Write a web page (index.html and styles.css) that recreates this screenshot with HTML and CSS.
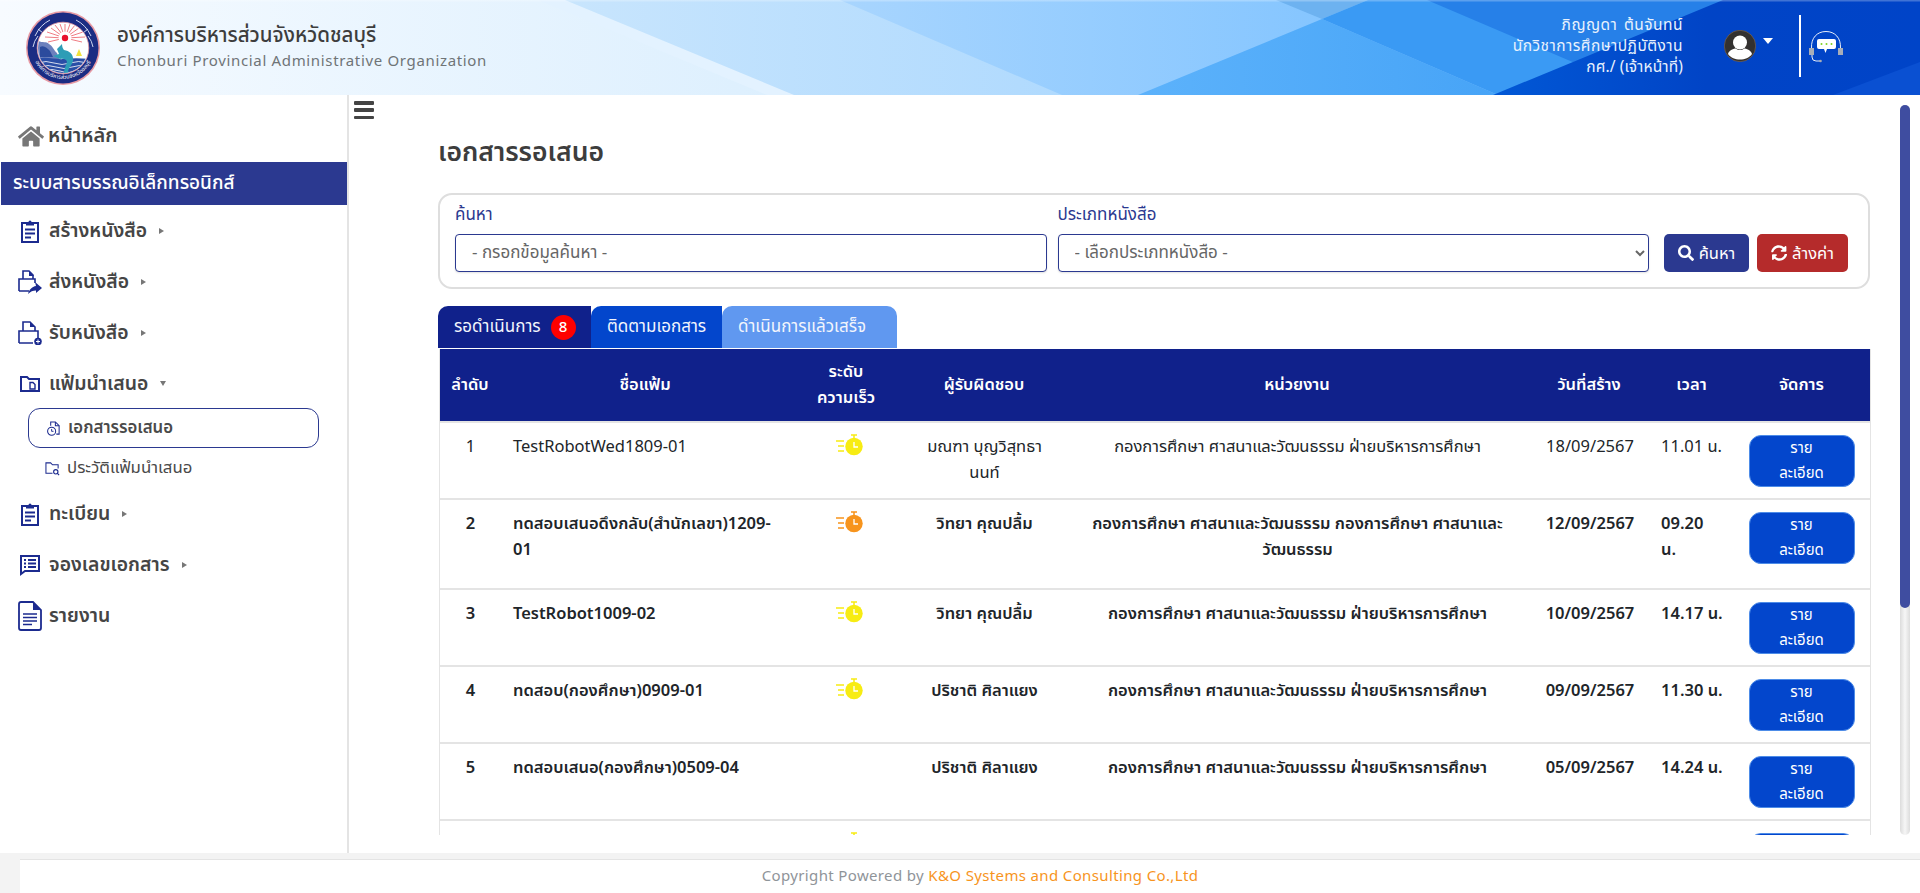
FILE: index.html
```html
<!DOCTYPE html>
<html lang="th">
<head>
<meta charset="utf-8">
<title>เอกสารรอเสนอ</title>
<link rel="stylesheet" href="styles.css">
</head>
<body>
<header class="topbar">
  <svg class="topbar-art" viewBox="0 0 1920 95" preserveAspectRatio="none" aria-hidden="true">
    <defs>
      <linearGradient id="g0" gradientUnits="userSpaceOnUse" x1="0" x2="800" y1="0" y2="0">
        <stop offset="0" stop-color="#f7fbff"/><stop offset="1" stop-color="#dceffe"/>
      </linearGradient>
      <linearGradient id="g2" gradientUnits="userSpaceOnUse" x1="565" x2="1062" y1="0" y2="0">
        <stop offset="0" stop-color="#c8e5fd"/><stop offset="1" stop-color="#b0dafe"/>
      </linearGradient>
      <linearGradient id="g3" gradientUnits="userSpaceOnUse" x1="840" x2="1368" y1="0" y2="0">
        <stop offset="0" stop-color="#a8d5fe"/><stop offset="1" stop-color="#82c4ff"/>
      </linearGradient>
      <linearGradient id="g4" gradientUnits="userSpaceOnUse" x1="1138" x2="1498" y1="0" y2="0">
        <stop offset="0" stop-color="#5cb2fb"/><stop offset="1" stop-color="#47a4f7"/>
      </linearGradient>
      <linearGradient id="g7" gradientUnits="userSpaceOnUse" x1="1493" x2="1920" y1="0" y2="0">
        <stop offset="0" stop-color="#0158d6"/><stop offset="0.5" stop-color="#0144c6"/><stop offset="1" stop-color="#0044c8"/>
      </linearGradient>
    </defs>
    <rect width="1920" height="95" fill="url(#g0)"/>
    <polygon points="538,0 1920,0 1920,95 767,95" fill="#e3f2ff"/>
    <polygon points="565,0 1920,0 1920,95 794,95" fill="url(#g2)"/>
    <polygon points="840,0 1920,0 1920,95 1062,95" fill="url(#g3)"/>
    <polygon points="1276,0 1368,0 1322,19" fill="#6db2f0"/>
    <polygon points="1138,95 1322,19 1498,95" fill="url(#g4)"/>
    <polygon points="1322,19 1368,0 1920,0 1920,95 1498,95" fill="#3a9af4"/>
    <polygon points="1427,0 1920,0 1920,95 1650,95" fill="#2680e8"/>
    <polygon points="1723,0 1920,0 1920,95 1493,95" fill="url(#g7)"/>
    <polygon points="1833,95 1920,62 1920,95" fill="#0a50d2"/>
    <rect width="1920" height="1.500" fill="#fff" opacity="0.25"/>
  </svg>
  <div class="brand">
    <svg class="logo" viewBox="0 0 74 74" aria-hidden="true">
      <defs>
        <path id="ring-path" d="M6 37A31 31 0 0 0 68 37"/>
        <clipPath id="inner-clip"><circle cx="37" cy="37" r="25"/></clipPath>
      </defs>
      <circle cx="37" cy="37" r="37" fill="#e79aa4"/>
      <circle cx="37" cy="37" r="35.500" fill="#1b2c83"/>
      <path d="M9 25Q14 14 24 9M65 25Q60 14 50 9M7 36Q8 30 12 25M67 36Q66 30 62 25" fill="none" stroke="#cfd6f0" stroke-width="1"/>
      <path d="M12 18L17 22L14 27M62 18L57 22L60 27" fill="none" stroke="#cfd6f0" stroke-width="1"/>
      <text class="logo-ring"><textPath href="#ring-path" startOffset="50%" text-anchor="middle">องค์การบริหารส่วนจังหวัดชลบุรี</textPath></text>
      <circle cx="37" cy="37" r="25.800" fill="#fff" stroke="#e79aa4" stroke-width="0.800"/>
      <g clip-path="url(#inner-clip)">
        <g stroke="#e8434e" stroke-width="0.700">
          <path d="M39 27L39 13M39 27L34 13M39 27L44 13M39 27L29 14M39 27L49 14M39 27L25 17M39 27L53 17M39 27L21 21M39 27L57 21M39 27L19 26M39 27L59 26M39 27L22 31M39 27L56 31"/>
        </g>
        <circle cx="39" cy="27" r="6.500" fill="#fff"/>
        <circle cx="39" cy="27" r="3.200" fill="#e8112d"/>
        <path d="M12 30C17 32 20 30 23 33C27 35 28 40 31 42L34 50H12Z" fill="#6c80bd"/>
        <path d="M14 36C18 34 21 37 24 40L27 46H14Z" fill="#2c4b9d"/>
        <path d="M10 48C20 45 30 49 38 48C46 47 54 47 64 48V66H10Z" fill="#2a4ea6"/>
        <path d="M12 52Q20 49 28 52T44 52T62 52M14 56Q22 53 30 56T46 56T60 56M18 60Q26 57 34 60T56 60" fill="none" stroke="#fff" stroke-width="0.800"/>
        <path d="M53 38L56 45H50Z" fill="#f2e23a"/>
        <path d="M36 33C36 36 37 38 38 39C44 40 48 44 47 50C46 54 43 56 42 60L44 65L38 62C38 58 40 54 41 51C41 49 38 47 34 48L27 45L33 43L31 38Z" fill="#2d9db6"/>
      </g>
    </svg>
    <div class="brand-text">
      <div class="brand-th">องค์การบริหารส่วนจังหวัดชลบุรี</div>
      <div class="brand-en">Chonburi Provincial Administrative Organization</div>
    </div>
  </div>
  <div class="user-area">
    <div class="user-lines">
      <div class="user-name">ภิญญดา ต้นจันทน์</div>
      <div class="user-job">นักวิชาการศึกษาปฏิบัติงาน</div>
      <div>กศ./ (เจ้าหน้าที่)</div>
    </div>
    <svg class="avatar" viewBox="0 0 32 32" aria-hidden="true">
      <circle cx="16" cy="16" r="15.700" fill="#333130" stroke="#8a6a4a" stroke-width="0.600"/>
      <circle cx="16" cy="12.500" r="7" fill="#fff"/>
      <path d="M4 24C5 20 10 18.500 12 18.500C14 20.500 18 20.500 20 18.500C22 18.500 27 20 28 24C25 28 21 29.500 16 29.500C11 29.500 7 28 4 24Z" fill="#fff"/>
    </svg>
    <span class="caret"></span>
    <span class="divider"></span>
    <svg class="support" viewBox="0 0 34 32" aria-hidden="true">
      <path d="M2.500 17C2 7 8 0.500 17 0.500C26 0.500 32 7 31.500 17" fill="none" stroke="#fff" stroke-width="0.900"/>
      <path d="M3 24V26Q3 30 7 30H11" fill="none" stroke="#fff" stroke-width="0.900"/>
      <circle cx="11.500" cy="30" r="1.300" fill="#a7adb8"/>
      <rect x="0" y="17" width="5" height="7" fill="#a7adb8"/>
      <rect x="29" y="17" width="5" height="7" fill="#a7adb8"/>
      <path d="M10 8H25Q27 8 27 10V16Q27 18 25 18H18L16.500 22L15 18H10Q8 18 8 16V10Q8 8 10 8Z" fill="#fff"/>
      <circle cx="12.500" cy="13" r="1" fill="#7ed321"/>
      <circle cx="17.500" cy="13" r="1" fill="#7ed321"/>
      <circle cx="22.500" cy="13" r="1" fill="#7ed321"/>
    </svg>
  </div>
</header>

<div class="shell">
  <aside class="sidebar">
    <a class="nav-home">
      <svg class="icon-home" viewBox="0 0 576 512" aria-hidden="true"><path fill="#777" d="M280 148L96 300v164a16 16 0 0 0 16 16l112-.3a16 16 0 0 0 16-16V368a16 16 0 0 1 16-16h64a16 16 0 0 1 16 16v95.600a16 16 0 0 0 16 16l112 .4a16 16 0 0 0 16-16V300L296 148a12 12 0 0 0-16 0zM571 251l-83-69V44a12 12 0 0 0-12-12h-56a12 12 0 0 0-12 12v72l-90-74a48 48 0 0 0-61 0L5 251a12 12 0 0 0-2 17l26 31a12 12 0 0 0 17 2L280 108a12 12 0 0 1 16 0l235 193a12 12 0 0 0 17-2l25-31a12 12 0 0 0-2-17z"/></svg>
      หน้าหลัก
    </a>
    <div class="nav-section">ระบบสารบรรณอิเล็กทรอนิกส์</div>
    <a class="nav-item">
      <svg class="nav-icon" viewBox="0 0 24 24" aria-hidden="true"><use href="#ic-clip"/></svg>
      สร้างหนังสือ <span class="tri-right"></span>
    </a>
    <a class="nav-item">
      <svg class="nav-icon" viewBox="0 0 24 24" aria-hidden="true"><path d="M1 21V9H5V1H11L15 5V9H17V13M1 21H11M5 9H15" fill="none" stroke="#1c2b8f" stroke-width="1.600"/><path d="M11 1V6H16Z" fill="#1c2b8f"/><path d="M17 12L24 18L18 23V20.500C15 20.500 12.500 21.500 10 24C11 20 14 16.500 18 16Z" fill="#1c2b8f"/></svg>
      ส่งหนังสือ <span class="tri-right"></span>
    </a>
    <a class="nav-item">
      <svg class="nav-icon" viewBox="0 0 24 24" aria-hidden="true"><path d="M1 22V10H5V1H12L17 6V10H20V17M5 10H17M1 22H15" fill="none" stroke="#1c2b8f" stroke-width="1.600"/><path d="M12 1V6H17Z" fill="#1c2b8f"/><circle cx="20" cy="20.500" r="3.800" fill="#1c2b8f"/><path d="M20 18.500V22.500M18 20.500H22" stroke="#fff" stroke-width="1"/></svg>
      รับหนังสือ <span class="tri-right"></span>
    </a>
    <a class="nav-item">
      <svg class="nav-icon" viewBox="0 0 24 24" aria-hidden="true"><path d="M3 19V5H9L11 7H21V19Z" fill="none" stroke="#1c2b8f" stroke-width="2"/><path d="M12 10.500H15L17 12.500V17H12Z" fill="none" stroke="#1c2b8f" stroke-width="1.400"/></svg>
      แฟ้มนำเสนอ <span class="tri-down"></span>
    </a>
    <a class="sub-item sub-active">
      <svg class="sub-icon" viewBox="0 0 16 16" aria-hidden="true"><path d="M5 5V1H10L14 5V14H11" fill="none" stroke="#1c2b8f" stroke-width="1.100"/><path d="M10 1V5H14" fill="none" stroke="#1c2b8f" stroke-width="1.100"/><circle cx="6" cy="11" r="4.300" fill="#fff" stroke="#1c2b8f" stroke-width="1.100"/><path d="M6 8.500V11H8" fill="none" stroke="#1c2b8f" stroke-width="1"/></svg>
      เอกสารรอเสนอ
    </a>
    <a class="sub-item">
      <svg class="sub-icon" viewBox="0 0 16 16" aria-hidden="true"><path d="M8 13H1V2H6L8 4H14V8" fill="none" stroke="#1c2b8f" stroke-width="1.100"/><circle cx="11.500" cy="11.500" r="2.300" fill="none" stroke="#1c2b8f" stroke-width="1.200"/><path d="M13 13L15 15" stroke="#1c2b8f" stroke-width="1.300"/></svg>
      ประวัติแฟ้มนำเสนอ
    </a>
    <a class="nav-item">
      <svg class="nav-icon" viewBox="0 0 24 24" aria-hidden="true"><use href="#ic-clip"/></svg>
      ทะเบียน <span class="tri-right"></span>
    </a>
    <a class="nav-item">
      <svg class="nav-icon" viewBox="0 0 24 24" aria-hidden="true"><path d="M3 3H21V18H7L3 21Z" fill="none" stroke="#1c2b8f" stroke-width="2"/><path d="M6 7H8M10 7H18M6 10.500H8M10 10.500H18M6 14H8M10 14H18" stroke="#1c2b8f" stroke-width="1.800"/></svg>
      จองเลขเอกสาร <span class="tri-right"></span>
    </a>
    <a class="nav-item nav-report">
      <svg class="nav-icon-lg" viewBox="0 0 24 30" aria-hidden="true"><path d="M1 3Q1 1 3 1H15L23 9V27Q23 29 21 29H3Q1 29 1 27Z" fill="none" stroke="#1c2b8f" stroke-width="1.800"/><path d="M15 1V9H23Z" fill="#1c2b8f"/><path d="M5 13H19M5 16.500H19M5 20H19M5 23.500H14" stroke="#1c2b8f" stroke-width="1.500"/></svg>
      รายงาน
    </a>
    <svg class="defs-holder" aria-hidden="true"><defs>
      <g id="ic-clip"><path d="M4 4H20V23H4Z" fill="none" stroke="#1c2b8f" stroke-width="2"/><path d="M8 3H10.500A1.500 1.500 0 0 1 13.500 3H16V6.500H8Z" fill="#1c2b8f"/><path d="M7 10.500H17M7 14.500H17M7 18.500H13" stroke="#1c2b8f" stroke-width="2"/></g>
    </defs></svg>
  </aside>

  <div class="content-wrap">
    <button class="hamburger" type="button" aria-label="menu"><span></span><span></span><span></span></button>
    <main class="main">
      <h1 class="page-title">เอกสารรอเสนอ</h1>
      <section class="search-panel">
        <div class="field">
          <label class="field-label">ค้นหา</label>
          <input class="control" type="text" placeholder="- กรอกข้อมูลค้นหา -">
        </div>
        <div class="field">
          <label class="field-label">ประเภทหนังสือ</label>
          <select class="control select"><option>- เลือกประเภทหนังสือ -</option></select>
        </div>
        <button class="btn btn-search" type="button">
          <svg class="btn-icon" viewBox="0 0 512 512" aria-hidden="true"><path fill="#fff" d="M505 443L405 343c-4-4-10-7-17-7h-16c28-35 44-80 44-128C416 93 323 0 208 0S0 93 0 208s93 208 208 208c48 0 93-16 128-44v16c0 7 3 13 7 17l100 100c9 9 24 9 34 0l28-28c9-10 9-25 0-34zM208 336c-71 0-128-57-128-128S137 80 208 80s128 57 128 128-57 128-128 128z"/></svg>
          ค้นหา
        </button>
        <button class="btn btn-reset" type="button">
          <svg class="btn-icon" viewBox="0 0 512 512" aria-hidden="true"><path fill="#fff" d="M370 133c-33-31-76-48-122-48-82 0-153 56-173 134-1 5-6 9-12 9H19c-8 0-13-7-12-14C30 95 129 8 248 8c65 0 125 26 168 67l35-35c15-15 41-4 41 17v134c0 13-11 24-24 24H334c-21 0-32-26-17-41l53-41zM32 296h134c21 0 32 26 17 41l-42 42c33 31 76 48 122 48 82 0 153-56 173-134 1-5 6-9 12-9h58c8 0 13 7 12 14-23 119-122 206-241 206-65 0-125-26-168-67l-35 35c-15 15-41 4-41-17V320c0-13 11-24 24-24z"/></svg>
          ล้างค่า
        </button>
      </section>

      <nav class="tabs">
        <a class="tab tab-wait">รอดำเนินการ <span class="badge">8</span></a>
        <a class="tab tab-track">ติดตามเอกสาร</a>
        <a class="tab tab-done">ดำเนินการแล้วเสร็จ</a>
      </nav>

      <table class="doc-table">
        <colgroup>
          <col class="c1"><col class="c2"><col class="c3"><col class="c4"><col class="c5"><col class="c6"><col class="c7"><col class="c8">
        </colgroup>
        <thead>
          <tr>
            <th>ลำดับ</th><th>ชื่อแฟ้ม</th><th>ระดับ<br>ความเร็ว</th><th>ผู้รับผิดชอบ</th><th>หน่วยงาน</th><th>วันที่สร้าง</th><th>เวลา</th><th>จัดการ</th>
          </tr>
        </thead>
        <tbody>
          <tr>
            <td class="ctr">1</td><td>TestRobotWed1809-01</td><td class="ctr"><svg class="speed"><use href="#speed-y"/></svg></td><td class="ctr">มณฑา บุญวิสุทธา<br>นนท์</td><td class="ctr">กองการศึกษา ศาสนาและวัฒนธรรม ฝ่ายบริหารการศึกษา</td><td class="ctr">18/09/2567</td><td>11.01 น.</td><td class="ctr btn-cell"><a class="detail">ราย<br>ละเอียด</a></td>
          </tr>
          <tr class="unread tall">
            <td class="ctr">2</td><td>ทดสอบเสนอดึงกลับ(สำนักเลขา)1209-<br>01</td><td class="ctr"><svg class="speed"><use href="#speed-o"/></svg></td><td class="ctr">วิทยา คุณปลื้ม</td><td class="ctr">กองการศึกษา ศาสนาและวัฒนธรรม กองการศึกษา ศาสนาและ<br>วัฒนธรรม</td><td class="ctr">12/09/2567</td><td>09.20<br>น.</td><td class="ctr btn-cell"><a class="detail">ราย<br>ละเอียด</a></td>
          </tr>
          <tr class="unread">
            <td class="ctr">3</td><td>TestRobot1009-02</td><td class="ctr"><svg class="speed"><use href="#speed-y"/></svg></td><td class="ctr">วิทยา คุณปลื้ม</td><td class="ctr">กองการศึกษา ศาสนาและวัฒนธรรม ฝ่ายบริหารการศึกษา</td><td class="ctr">10/09/2567</td><td>14.17 น.</td><td class="ctr btn-cell"><a class="detail">ราย<br>ละเอียด</a></td>
          </tr>
          <tr class="unread">
            <td class="ctr">4</td><td>ทดสอบ(กองศึกษา)0909-01</td><td class="ctr"><svg class="speed"><use href="#speed-y"/></svg></td><td class="ctr">ปริชาติ ศิลาแยง</td><td class="ctr">กองการศึกษา ศาสนาและวัฒนธรรม ฝ่ายบริหารการศึกษา</td><td class="ctr">09/09/2567</td><td>11.30 น.</td><td class="ctr btn-cell"><a class="detail">ราย<br>ละเอียด</a></td>
          </tr>
          <tr class="unread">
            <td class="ctr">5</td><td>ทดสอบเสนอ(กองศึกษา)0509-04</td><td class="ctr"></td><td class="ctr">ปริชาติ ศิลาแยง</td><td class="ctr">กองการศึกษา ศาสนาและวัฒนธรรม ฝ่ายบริหารการศึกษา</td><td class="ctr">05/09/2567</td><td>14.24 น.</td><td class="ctr btn-cell"><a class="detail">ราย<br>ละเอียด</a></td>
          </tr>
          <tr class="unread">
            <td class="ctr"></td><td></td><td class="ctr"><svg class="speed"><use href="#speed-y"/></svg></td><td></td><td></td><td></td><td></td><td class="ctr btn-cell"><a class="detail"></a></td>
          </tr>
        </tbody>
      </table>
      <svg class="defs-holder" aria-hidden="true"><defs>
        <g id="speed-y"><path d="M0 7H8M2 12H8M2 17H8" stroke="#f7ec13" stroke-width="1.500"/><path d="M15 1H21M18 1V4" stroke="#f7ec13" stroke-width="1.500"/><circle cx="18" cy="12.500" r="8.700" fill="#f7ec13"/><path d="M18 8V13H22" fill="none" stroke="#fff" stroke-width="1.300"/></g>
        <g id="speed-o"><path d="M0 7H8M2 12H8M2 17H8" stroke="#f7941d" stroke-width="1.500"/><path d="M15 1H21M18 1V4" stroke="#f7941d" stroke-width="1.500"/><circle cx="18" cy="12.500" r="8.700" fill="#f7941d"/><path d="M18 8V13H22" fill="none" stroke="#fff" stroke-width="1.300"/></g>
      </defs></svg>
    </main>
    <div class="scroll-track"><div class="scroll-thumb"></div></div>
  </div>
</div>

<footer class="footer">
  <div class="footer-inner">Copyright Powered by <span class="footer-co">K&amp;O Systems and Consulting Co.,Ltd</span></div>
</footer>
</body>
</html>
```
FILE: styles.css
```css
* { box-sizing: border-box; }
html, body { margin: 0; height: 100%; overflow: hidden; }
body {
  display: flex;
  flex-direction: column;
  height: 893px;
  background: #fff;
  color: #212529;
  font-family: "Noto Sans Thai", "Noto Sans Thai Looped", "Noto Sans", Lato, sans-serif;
  font-size: 16.500px;
}
a { color: inherit; text-decoration: none; }

.topbar { position: relative; height: 95px; flex: none; display: flex; align-items: center; justify-content: space-between; overflow: hidden; }
.topbar-art { position: absolute; inset: 0; width: 100%; height: 100%; }
.brand { position: relative; display: flex; align-items: center; gap: 17px; padding-left: 26px; }
.logo { width: 74px; height: 74px; display: block; }
.logo-ring { font-size: 5.500px; fill: #fff; }
.brand-th { font-size: 20.500px; font-weight: 500; color: #3d3d3d; line-height: 28px; }
.brand-en { font-size: 15px; color: #6f7477; letter-spacing: 0.660px; line-height: 24px; }
.user-area { position: relative; display: flex; align-items: center; height: 62px; padding-right: 77px; margin-top: -3px; }
.user-lines { text-align: right; color: #e9f2fd; font-size: 15.500px; letter-spacing: 0.100px; line-height: 21px; margin-right: 41px; }
.user-name { letter-spacing: 0.500px; word-spacing: 2px; }
.user-job { letter-spacing: 0.450px; }
.avatar { width: 32px; height: 32px; margin-right: 7px; margin-top: -1px; }
.caret { width: 0; height: 0; border-left: 5px solid transparent; border-right: 5px solid transparent; border-top: 6px solid #fff; margin-right: 26px; margin-top: -10px; }
.divider { width: 2px; height: 62px; background: #fff; margin-right: 8px; }
.support { width: 34px; height: 32px; margin-top: 1px; }

.shell { flex: 1; display: flex; min-height: 0; }
.sidebar { width: 349px; flex: none; border-right: 2px solid #e4e4e4; padding: 27px 0 0 1px; color: #3d3d3d; height: 758px; }
.nav-home { display: flex; align-items: center; gap: 4px; height: 28px; padding-left: 17px; font-size: 20px; font-weight: 600; color: #444; }
.icon-home { width: 26px; height: 23px; }
.nav-section { height: 43px; margin-top: 12px; width: 346px; background: #2b3990; color: #fff; font-size: 19px; font-weight: 500; line-height: 43px; padding-left: 12px; }
.nav-item { display: flex; align-items: center; height: 51px; padding-left: 17px; font-size: 19.400px; font-weight: 600; color: #454545; }
.nav-icon { width: 24px; height: 24px; margin-right: 7px; flex: none; }
.nav-icon-lg { width: 24px; height: 30px; margin-right: 7px; flex: none; }
.nav-report { height: 52px; }
.tri-right { display: inline-block; margin-left: 12px; width: 0; height: 0; border-top: 3px solid transparent; border-bottom: 3px solid transparent; border-left: 5px solid #777; }
.tri-down { display: inline-block; margin-left: 12px; width: 0; height: 0; border-left: 3px solid transparent; border-right: 3px solid transparent; border-top: 5px solid #777; }
.sub-item { display: flex; align-items: center; gap: 7px; height: 40px; margin-left: 27px; width: 291px; padding-left: 17px; font-size: 16.800px; color: #4a4a4a; }
.sub-active { border: 1px solid #2b3990; border-radius: 12px; font-weight: 600; margin-top: -1px; }
.sub-icon { width: 15px; height: 15px; flex: none; }
.defs-holder { width: 0; height: 0; position: absolute; }

.content-wrap { position: relative; flex: 1; min-width: 0; height: 740px; display: flex; }
.hamburger { position: absolute; left: 5px; top: 6px; width: 20px; height: 18px; padding: 0; border: 0; background: none; display: flex; flex-direction: column; justify-content: space-between; }
.hamburger span { display: block; height: 3.500px; background: #444; border-radius: 1px; }
.main { flex: 1; min-width: 0; overflow: hidden; padding: 40px 0 0 89px; height: 740px; }
.page-title { margin: 0; font-size: 26.500px; font-weight: 600; color: #3d3d3d; line-height: 36px; }
.search-panel { width: 1432px; height: 96px; margin-top: 22px; border: 2px solid #dedede; border-radius: 14px; padding: 0 20px 15px 15px; display: flex; align-items: flex-end; }
.field { display: flex; flex-direction: column; width: 592px; margin-right: 11px; }
.field + .field { margin-right: 15px; }
.field-label { font-size: 17px; line-height: 22px; color: #2b3990; margin-bottom: 8px; }
.control { height: 38px; width: 100%; border: 1px solid #2b3990; border-radius: 4px; background: #fff; padding: 0 16px; font: inherit; font-size: 17px; color: #666; box-shadow: 0 1px 2px rgba(0,0,0,.12); }
.control::placeholder { color: #666; }
.select { padding: 0 12px; }
.btn { height: 38px; border: 0; border-radius: 5px; color: #fff; font: inherit; font-size: 16.500px; display: inline-flex; align-items: center; justify-content: center; gap: 5px; flex: none; }
.btn-icon { width: 16px; height: 16px; }
.btn-search { width: 85px; background: #2b3990; margin-right: 8px; }
.btn-reset { width: 91px; background: #b52b2b; }

.tabs { display: flex; height: 42px; margin-top: 17px; }
.tab { height: 42px; display: flex; align-items: center; padding: 0 16px; border-radius: 10px 10px 0 0; color: #f2f5fc; font-size: 17px; }
.tab-wait { width: 153px; background: #10218b; gap: 10px; position: relative; z-index: 3; border-top-right-radius: 0; white-space: nowrap; }
.tab-track { width: 131px; background: #0346cc; position: relative; z-index: 2; border-top-right-radius: 0; white-space: nowrap; }
.tab-done { width: 175px; background: #6098f0; white-space: nowrap; }
.badge { width: 25px; height: 25px; border-radius: 50%; background: #f00; color: #fff; font-size: 15px; font-weight: 500; display: flex; align-items: center; justify-content: center; flex: none; }

.doc-table { width: 1432px; margin: 1px 0 0 1px; border-collapse: separate; border-spacing: 0; table-layout: fixed; border-left: 1px solid #e4e4e4; border-right: 1px solid #e4e4e4; }
.c1 { width: 60px; } .c2 { width: 290px; } .c3 { width: 112px; } .c4 { width: 164px; } .c5 { width: 462px; } .c6 { width: 122px; } .c7 { width: 83px; } .c8 { width: 137px; }
.doc-table th { background: #10218b; color: #fff; height: 72px; font-size: 16.500px; font-weight: 600; line-height: 26px; padding: 0 4px; }
.doc-table td { height: 77px; vertical-align: top; padding: 11px 12px 0 13px; border-top: 2px solid #e4e4e4; line-height: 26px; font-size: 16.500px; color: #212529; }
.doc-table td:nth-child(6) { padding-left: 6px; padding-right: 4px; }
.doc-table td:nth-child(7) { padding-left: 11px; padding-right: 2px; }
.doc-table td.btn-cell { padding: 12px 0 0; }
.doc-table .tall td { height: 90px; }
.unread td { font-weight: 600; }
.ctr { text-align: center; }
.speed { width: 28px; height: 22px; display: inline-block; margin-left: 6px; }
.detail { display: block; width: 106px; height: 52px; margin: 0 auto; background: #0346cc; border: 1px solid #4d8ce8; border-radius: 12px; color: #fff; font-size: 15px; font-weight: 400; line-height: 25px; }

.scroll-track { width: 10px; height: 730px; margin: 10px 10px 0; flex: none; background: linear-gradient(90deg, #dcdcdc, #f6f6f6 50%, #dcdcdc); border-radius: 5px; }
.scroll-thumb { width: 10px; height: 503px; background: #3f4da0; border-radius: 5px; }

.footer { height: 40px; flex: none; background: #f3f3f3; padding: 6px 0 0 20px; }
.footer-inner { height: 34px; background: #fff; border-top: 1px solid #e4e4e4; text-align: center; font-size: 15px; letter-spacing: 0.360px; line-height: 33px; color: #8f9499; padding-left: 20px; }
.footer-co { color: #f7941d; }
```
